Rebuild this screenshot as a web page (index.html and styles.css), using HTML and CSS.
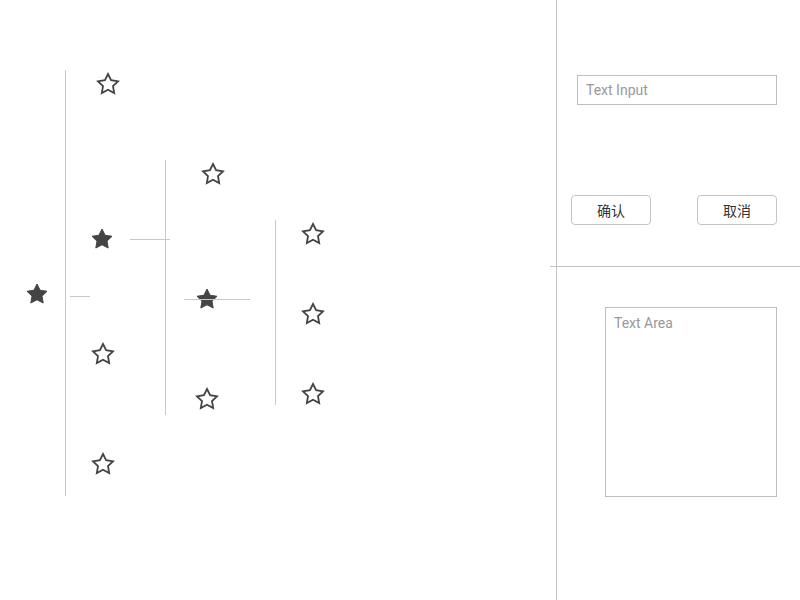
FILE: index.html
```html
<!DOCTYPE html>
<html lang="zh">
<head>
<meta charset="utf-8">
<link rel="stylesheet" href="styles.css">
</head>
<body>
<svg width="0" height="0" class="defs">
  <defs>
    <polygon id="star" points="12,2 15.09,8.26 22,9.27 17,14.14 18.18,21.02 12,17.77 5.82,21.02 7,14.14 2,9.27 8.91,8.26"/>
  </defs>
</svg>
<div class="app">
  <div class="canvas">
    <div class="vline v1"></div>
    <div class="hline h1"></div>
    <div class="vline v2"></div>
    <div class="hline h2"></div>
    <div class="vline v3"></div>

    <svg class="star filled n-root" viewBox="0 0 24 24"><use href="#star"/></svg>
    <svg class="star n-a1" viewBox="0 0 24 24"><use href="#star"/></svg>
    <svg class="star filled n-a2" viewBox="0 0 24 24"><use href="#star"/></svg>
    <svg class="star n-a3" viewBox="0 0 24 24"><use href="#star"/></svg>
    <svg class="star n-a4" viewBox="0 0 24 24"><use href="#star"/></svg>
    <svg class="star n-b1" viewBox="0 0 24 24"><use href="#star"/></svg>
    <svg class="star filled n-b2" viewBox="0 0 24 24"><use href="#star"/></svg>
    <svg class="star n-b3" viewBox="0 0 24 24"><use href="#star"/></svg>
    <svg class="star n-c1" viewBox="0 0 24 24"><use href="#star"/></svg>
    <svg class="star n-c2" viewBox="0 0 24 24"><use href="#star"/></svg>
    <svg class="star n-c3" viewBox="0 0 24 24"><use href="#star"/></svg>

    <div class="hline h3"></div>
  </div>
  <div class="side">
    <div class="side-top">
      <div class="input">Text Input</div>
      <div class="buttons">
        <button class="btn">确认</button>
        <button class="btn">取消</button>
      </div>
    </div>
    <div class="side-bottom">
      <div class="textarea">Text Area</div>
    </div>
  </div>
</div>
</body>
</html>
```
FILE: styles.css
```css
html, body {
  margin: 0;
  padding: 0;
  background: #fff;
}
body {
  font-family: Roboto, "Noto Sans CJK SC", sans-serif;
  width: 800px;
  height: 600px;
  overflow: hidden;
}
.defs {
  position: absolute;
}
.app {
  display: flex;
  width: 800px;
  height: 600px;
}
.canvas {
  position: relative;
  width: 556px;
  height: 600px;
  border-right: 1px solid #c4c4c4;
  flex: none;
}
.vline {
  position: absolute;
  width: 1px;
  background: #c8c8c8;
}
.hline {
  position: absolute;
  height: 1px;
  background: #c8c8c8;
}
.v1 { left: 65px; top: 70px; height: 426px; }
.h1 { left: 70px; top: 296px; width: 20px; }
.v2 { left: 165px; top: 160px; height: 255px; }
.h2 { left: 130px; top: 239px; width: 40px; }
.v3 { left: 275px; top: 220px; height: 185px; }
.h3 { left: 184px; top: 299px; width: 66px; z-index: 2; }

.star {
  position: absolute;
  width: 24px;
  height: 24px;
  fill: none;
  stroke: #444;
  stroke-width: 1.8;
  stroke-linejoin: miter;
}
.star.filled {
  fill: #444;
  stroke-width: 1;
}
.n-root { left: 25px; top: 282px; }
.n-a1 { left: 96px; top: 72px; }
.n-a2 { left: 90px; top: 227px; }
.n-a3 { left: 91px; top: 342px; }
.n-a4 { left: 91px; top: 452px; }
.n-b1 { left: 201px; top: 162px; }
.n-b2 { left: 195px; top: 287px; }
.n-b3 { left: 195px; top: 387px; }
.n-c1 { left: 301px; top: 222px; }
.n-c2 { left: 301px; top: 302px; }
.n-c3 { left: 301px; top: 382px; }

.side {
  flex: 1;
  display: flex;
  flex-direction: column;
}
.side-top {
  height: 267px;
  margin-left: -7px;
  border-bottom: 1px solid #c4c4c4;
  box-sizing: border-box;
  padding: 75px 23px 0 21px;
  display: flex;
  flex-direction: column;
  align-items: flex-end;
}
.input {
  width: 200px;
  height: 30px;
  box-sizing: border-box;
  border: 1px solid #bdbdbd;
  padding: 0 8px;
  font-size: 14px;
  line-height: 29px;
  color: #999;
}
.buttons {
  margin-top: 90px;
  width: 206px;
  display: flex;
  justify-content: space-between;
}
.btn {
  width: 80px;
  height: 30px;
  box-sizing: border-box;
  border: 1px solid #c4c4c4;
  border-radius: 4px;
  background: #fff;
  font-family: Roboto, "Noto Sans CJK SC", sans-serif;
  font-size: 14px;
  color: #333;
  padding: 0;
}
.side-bottom {
  flex: 1;
  padding: 40px 23px 0 0;
  display: flex;
  justify-content: flex-end;
}
.textarea {
  width: 172px;
  height: 190px;
  box-sizing: border-box;
  border: 1px solid #bdbdbd;
  padding: 6px 8px;
  font-size: 14px;
  line-height: 18px;
  color: #999;
}
```
